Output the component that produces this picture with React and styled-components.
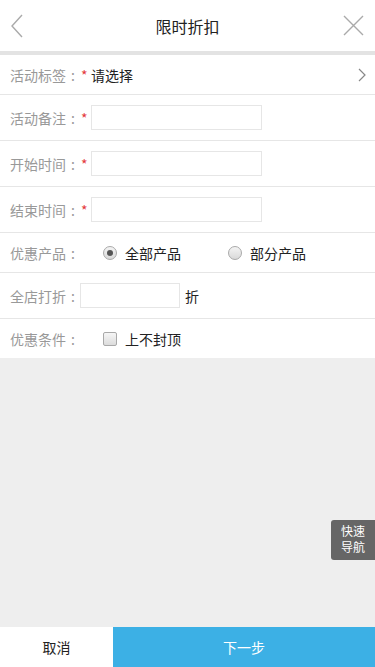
import React from 'react';
import styled, { createGlobalStyle } from 'styled-components';

const GlobalStyle = createGlobalStyle`
  html, body {
    margin: 0;
    padding: 0;
    height: 100%;
  }
  body {
    font-family: "Noto Sans CJK SC", "Noto Sans", sans-serif;
    background: #eeeeee;
  }
  #root {
    height: 100%;
  }
`;

const Page = styled.div`
  display: flex;
  flex-direction: column;
  height: 667px;
  background: #eeeeee;
  position: relative;
`;

const Header = styled.header`
  display: flex;
  align-items: center;
  justify-content: space-between;
  height: 51px;
  padding: 0 10px;
  background: #fff;
  border-bottom: 4px solid #e3e3e3;
`;

const IconButton = styled.span`
  display: flex;
  align-items: center;
  width: 22px;
  height: 22px;
`;

const Title = styled.h1`
  margin: 0;
  font-size: 16px;
  font-weight: normal;
  color: #222;
`;

const Form = styled.div`
  background: #fff;
`;

const Row = styled.div`
  display: flex;
  align-items: center;
  height: ${({ $tall }) => ($tall ? '45px' : '39px')};
  padding-left: 10px;
  border-bottom: 1px solid #e6e6e6;
  font-size: 14px;
  &:last-child {
    border-bottom: none;
  }
`;

const Label = styled.span`
  display: flex;
  width: 70px;
  color: #999;
  white-space: nowrap;
`;

const Colon = styled.span`
  width: 14px;
  text-align: center;
`;

const Star = styled.span`
  color: #e4393c;
  width: 10px;
  margin-left: 1px;
`;

const Value = styled.span`
  flex: 1;
  color: #222;
`;

const Input = styled.input`
  box-sizing: border-box;
  width: ${({ $w }) => $w || 171}px;
  height: 25px;
  border: 1px solid #e6e6e6;
  outline: none;
  padding: 0 4px;
  font-size: 14px;
`;

const Unit = styled.span`
  margin-left: 5px;
  color: #222;
`;

const Options = styled.div`
  display: flex;
  align-items: center;
  margin-left: 23px;
`;

const Option = styled.label`
  display: flex;
  align-items: center;
  width: 125px;
  color: #222;
`;

const Radio = styled.span`
  box-sizing: border-box;
  width: 14px;
  height: 14px;
  border-radius: 50%;
  border: 1px solid #a9a9a9;
  background: linear-gradient(#f4f4f4, #d9d9d9);
  margin-right: 8px;
  display: flex;
  align-items: center;
  justify-content: center;
  &::after {
    content: '';
    display: ${({ $on }) => ($on ? 'block' : 'none')};
    width: 6px;
    height: 6px;
    border-radius: 50%;
    background: #555;
  }
`;

const Check = styled.span`
  box-sizing: border-box;
  width: 14px;
  height: 14px;
  border-radius: 2px;
  border: 1px solid #a9a9a9;
  background: linear-gradient(#f6f6f6, #dcdcdc);
  margin-right: 8px;
`;

const Filler = styled.div`
  flex: 1;
`;

const QuickNav = styled.div`
  position: absolute;
  right: 0;
  top: 520px;
  width: 44px;
  height: 40px;
  box-sizing: border-box;
  padding-top: 3px;
  background: #666;
  border-radius: 3px 0 0 3px;
  color: #fff;
  font-size: 12px;
  line-height: 16px;
  text-align: center;
`;

const Footer = styled.footer`
  display: flex;
  height: 40px;
`;

const FooterButton = styled.button`
  border: none;
  margin: 0;
  padding: 0;
  font-family: inherit;
  font-size: 14px;
  width: ${({ $primary }) => ($primary ? '262px' : '113px')};
  background: ${({ $primary }) => ($primary ? '#3cb0e5' : '#fff')};
  color: ${({ $primary }) => ($primary ? '#fff' : '#222')};
`;

const Chevron = ({ dir }) => (
  <svg width="14" height="24" viewBox="0 0 14 24" fill="none" stroke="#aaa" strokeWidth="1.4">
    {dir === 'left' ? <path d="M12 1 L2 12 L12 23" /> : <path d="M2 1 L12 12 L2 23" />}
  </svg>
);

const FieldLabel = ({ children }) => (
  <Label>
    {children}
    <Colon>:</Colon>
  </Label>
);

export default function App() {
  return (
    <Page>
      <GlobalStyle />
      <Header>
        <IconButton>
          <Chevron dir="left" />
        </IconButton>
        <Title>限时折扣</Title>
        <IconButton>
          <svg width="21" height="21" viewBox="0 0 21 21" stroke="#aaa" strokeWidth="1.4">
            <path d="M1 1 L20 20 M20 1 L1 20" />
          </svg>
        </IconButton>
      </Header>
      <Form>
        <Row>
          <FieldLabel>活动标签</FieldLabel>
          <Star>*</Star>
          <Value>请选择</Value>
          <svg width="20" height="14" viewBox="0 0 20 14" fill="none" stroke="#888" strokeWidth="1.2" style={{ marginRight: 2 }}>
            <path d="M6 1 L12 7 L6 13" />
          </svg>
        </Row>
        <Row $tall>
          <FieldLabel>活动备注</FieldLabel>
          <Star>*</Star>
          <Input />
        </Row>
        <Row $tall>
          <FieldLabel>开始时间</FieldLabel>
          <Star>*</Star>
          <Input />
        </Row>
        <Row $tall>
          <FieldLabel>结束时间</FieldLabel>
          <Star>*</Star>
          <Input />
        </Row>
        <Row>
          <FieldLabel>优惠产品</FieldLabel>
          <Options>
            <Option>
              <Radio $on />
              全部产品
            </Option>
            <Option>
              <Radio />
              部分产品
            </Option>
          </Options>
        </Row>
        <Row $tall>
          <FieldLabel>全店打折</FieldLabel>
          <Input $w={100} />
          <Unit>折</Unit>
        </Row>
        <Row>
          <FieldLabel>优惠条件</FieldLabel>
          <Options>
            <Option>
              <Check />
              上不封顶
            </Option>
          </Options>
        </Row>
      </Form>
      <Filler />
      <QuickNav>
        快速
        <br />
        导航
      </QuickNav>
      <Footer>
        <FooterButton>取消</FooterButton>
        <FooterButton $primary>下一步</FooterButton>
      </Footer>
    </Page>
  );
}
